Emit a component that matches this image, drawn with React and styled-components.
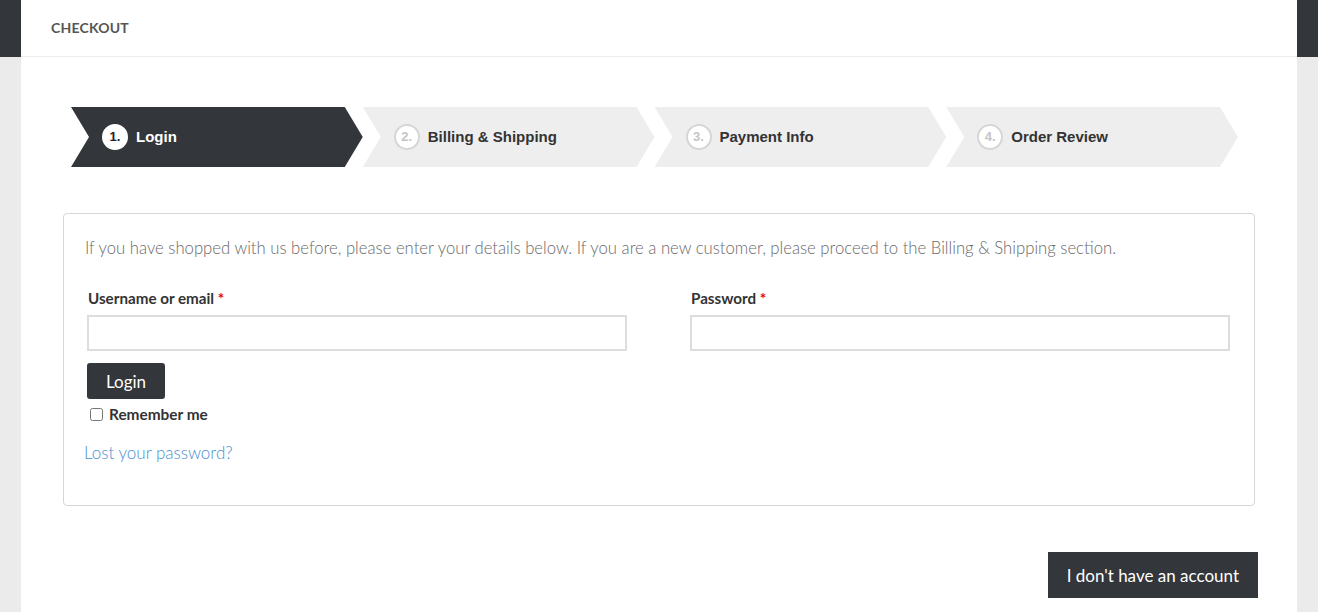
import React from "react";
import styled, { createGlobalStyle } from "styled-components";

const Global = createGlobalStyle`
  * { box-sizing: border-box; }
  html, body { margin: 0; padding: 0; }
  body {
    font-family: "Lato", "Liberation Sans", sans-serif;
    background: linear-gradient(to bottom, #33363b 0, #33363b 57px, #ebebeb 57px);
    min-height: 100vh;
  }
`;

const Shell = styled.div`
  margin: 0 21px;
  background: #fff;
  min-height: 612px;
`;

const Header = styled.header`
  height: 57px;
  border-bottom: 1px solid #ececec;
  display: flex;
  align-items: center;
  padding: 0 0 2px 30px;
`;

const Title = styled.h1`
  margin: 0;
  font-size: 14px;
  font-weight: 700;
  color: #555;
  letter-spacing: 0.2px;
`;

const Main = styled.main`
  padding: 50px 42px 0;
`;

const Steps = styled.ol`
  list-style: none;
  margin: 0 0 0 8px;
  padding: 0;
  display: flex;
`;

const Step = styled.li`
  width: 291.75px;
  height: 60px;
  flex: none;
  display: flex;
  align-items: center;
  gap: 8px;
  padding: 0 0 1px 31px;
  background: ${(p) => (p.$active ? "#33363b" : "#eeeeee")};
  color: ${(p) => (p.$active ? "#fff" : "#333")};
  clip-path: polygon(0 0, calc(100% - 18px) 0, 100% 50%, calc(100% - 18px) 100%, 0 100%, 18px 50%);
  font-family: "Liberation Sans", Arial, sans-serif;
  font-weight: 700;
  font-size: 15px;
`;

const Num = styled.span`
  width: 26px;
  height: 26px;
  border-radius: 50%;
  background: #fff;
  border: 2px solid ${(p) => (p.$active ? "#fff" : "#d6d6d6")};
  color: ${(p) => (p.$active ? "#222" : "#c4c4c4")};
  display: flex;
  align-items: center;
  justify-content: center;
  font-size: 13px;
  font-weight: 700;
  flex: none;
`;

const Card = styled.section`
  margin-top: 46px;
  border: 1px solid #d6d6d6;
  border-radius: 4px;
  padding: 22px 24px 40px 21px;
`;

const Intro = styled.p`
  margin: 0 0 28px;
  font-size: 16.7px;
  line-height: 24px;
  font-weight: 300;
  color: #6a6a6a;
`;

const Form = styled.form`
  padding-left: 2px;
`;

const Row = styled.div`
  display: grid;
  grid-template-columns: 540px 540px;
  column-gap: 63px;
`;

const Field = styled.div`
  display: flex;
  flex-direction: column;
`;

const Label = styled.label`
  font-size: 15.2px;
  font-weight: 700;
  color: #333;
  line-height: 20px;
  margin: 0 0 7px 1px;
`;

const Req = styled.span`
  color: #e2001a;
`;

const Input = styled.input`
  height: 36px;
  border: 2px solid #dddddd;
  background: #fff;
  outline: none;
  font: inherit;
`;

const DarkButton = styled.button`
  background: #33363b;
  color: #fff;
  border: none;
  border-radius: ${(p) => (p.$square ? "0" : "3px")};
  font-family: "Lato", sans-serif;
  font-size: 17px;
  font-weight: 400;
  cursor: pointer;
`;

const LoginButton = styled(DarkButton)`
  margin-top: 12px;
  height: 36px;
  width: 78px;
`;

const Remember = styled.label`
  display: flex;
  align-items: center;
  gap: 6px;
  margin-top: 7px;
  margin-left: 3px;
  font-size: 15.4px;
  font-weight: 700;
  color: #333;
  line-height: 16px;
`;

const Check = styled.input`
  margin: 0;
  width: 13px;
  height: 13px;
`;

const Lost = styled.a`
  display: inline-block;
  margin-top: 19px;
  margin-left: -1px;
  font-size: 17px;
  font-weight: 300;
  color: #4a8fd4;
  text-decoration: none;
  line-height: 24px;
`;

const Footer = styled.div`
  display: flex;
  justify-content: flex-end;
  margin: 46px -3px 0 0;
`;

const AccountButton = styled(DarkButton)`
  height: 46px;
  padding: 0 19px;
`;

const steps = ["Login", "Billing & Shipping", "Payment Info", "Order Review"];

export default function App() {
  return (
    <>
      <Global />
      <Shell>
        <Header>
          <Title>CHECKOUT</Title>
        </Header>
        <Main>
          <Steps>
            {steps.map((s, i) => (
              <Step key={s} $active={i === 0}>
                <Num $active={i === 0}>{i + 1}.</Num>
                {s}
              </Step>
            ))}
          </Steps>
          <Card>
            <Intro>
              If you have shopped with us before, please enter your details below. If you are a new customer, please proceed to the Billing &amp; Shipping section.
            </Intro>
            <Form onSubmit={(e) => e.preventDefault()}>
              <Row>
                <Field>
                  <Label>
                    Username or email <Req>*</Req>
                  </Label>
                  <Input type="text" />
                </Field>
                <Field>
                  <Label>
                    Password <Req>*</Req>
                  </Label>
                  <Input type="password" />
                </Field>
              </Row>
              <LoginButton type="submit">Login</LoginButton>
              <Remember>
                <Check type="checkbox" />
                Remember me
              </Remember>
            </Form>
            <Lost href="#">Lost your password?</Lost>
          </Card>
          <Footer>
            <AccountButton $square type="button">I don't have an account</AccountButton>
          </Footer>
        </Main>
      </Shell>
    </>
  );
}
